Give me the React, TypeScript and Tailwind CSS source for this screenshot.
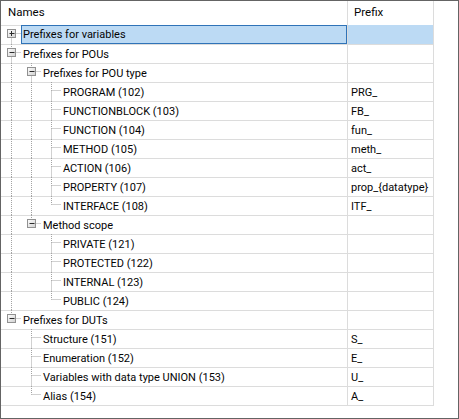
import React from "react";

type Item = {
  label: string;
  prefix?: string;
  open?: boolean;
  collapsed?: boolean;
  children?: Item[];
};

const tree: Item[] = [
  { label: "Prefixes for variables", collapsed: true },
  {
    label: "Prefixes for POUs",
    open: true,
    children: [
      {
        label: "Prefixes for POU type",
        open: true,
        children: [
          { label: "PROGRAM (102)", prefix: "PRG_" },
          { label: "FUNCTIONBLOCK (103)", prefix: "FB_" },
          { label: "FUNCTION (104)", prefix: "fun_" },
          { label: "METHOD (105)", prefix: "meth_" },
          { label: "ACTION (106)", prefix: "act_" },
          { label: "PROPERTY (107)", prefix: "prop_{datatype}" },
          { label: "INTERFACE (108)", prefix: "ITF_" },
        ],
      },
      {
        label: "Method scope",
        open: true,
        children: [
          { label: "PRIVATE (121)" },
          { label: "PROTECTED (122)" },
          { label: "INTERNAL (123)" },
          { label: "PUBLIC (124)" },
        ],
      },
    ],
  },
  {
    label: "Prefixes for DUTs",
    open: true,
    children: [
      { label: "Structure (151)", prefix: "S_" },
      { label: "Enumeration (152)", prefix: "E_" },
      { label: "Variables with data type UNION (153)", prefix: "U_" },
      { label: "Alias (154)", prefix: "A_" },
    ],
  },
];

type Row = {
  item: Item;
  depth: number;
  guides: boolean[];
  last: boolean;
  firstRoot: boolean;
  expander: "open" | "closed" | null;
};

function flatten(items: Item[], depth: number, guides: boolean[], out: Row[]) {
  items.forEach((item, i) => {
    const last = i === items.length - 1;
    const hasKids = !!item.collapsed || !!(item.children && item.children.length);
    out.push({
      item,
      depth,
      guides,
      last,
      firstRoot: depth === 0 && i === 0,
      expander: hasKids ? (item.collapsed ? "closed" : "open") : null,
    });
    if (item.children && item.open) {
      flatten(item.children, depth + 1, [...guides, !last], out);
    }
  });
}

const rows: Row[] = [];
flatten(tree, 0, [], rows);

const DOT = "#a3a3a3";

function Guides({ row }: { row: Row }) {
  const w = 20 * (row.depth + 1) + 2;
  const lx = (d: number) => 10 + 20 * d + 0.5;
  const own = lx(row.depth);
  const mid = 8.5;
  return (
    <svg
      width={w}
      height={19}
      className="absolute left-0 top-[-1px] pointer-events-none"
    >
      {row.guides.map((on, a) =>
        on ? (
          <line key={a} x1={lx(a)} y1={0} x2={lx(a)} y2={19} stroke={DOT} strokeDasharray="1 1" />
        ) : null
      )}
      {!row.firstRoot && (
        <line x1={own} y1={0} x2={own} y2={mid} stroke={DOT} strokeDasharray="1 1" />
      )}
      {!row.last && (
        <line x1={own} y1={mid} x2={own} y2={19} stroke={DOT} strokeDasharray="1 1" />
      )}
      <line x1={own} y1={mid} x2={own + 10} y2={mid} stroke={DOT} strokeDasharray="1 1" />
      {row.expander && (
        <g>
          <rect
            x={own - 4}
            y={4.5}
            width={8}
            height={8}
            fill="url(#tree-box-fill)"
            stroke="#919191"
          />
          <line x1={own - 2} y1={mid} x2={own + 3} y2={mid} stroke="#2b2b2b" />
          {row.expander === "closed" && (
            <line x1={own} y1={6} x2={own} y2={11} stroke="#2b2b2b" />
          )}
        </g>
      )}
    </svg>
  );
}

export default function App() {
  return (
    <div className="relative w-[459px] h-[419px] overflow-hidden border border-[#646464] bg-white text-[11px] leading-none text-[#050505] font-['Segoe_UI','Roboto',sans-serif]">
      <svg width={0} height={0} className="absolute">
        <defs>
          <linearGradient id="tree-box-fill" x1="0" y1="0" x2="1" y2="1">
            <stop offset="0" stopColor="#ffffff" />
            <stop offset="1" stopColor="#cfcfcf" />
          </linearGradient>
        </defs>
      </svg>

      <div className="w-[433px] border-b border-[#dcdcdc]">
        {/* column headers */}
        <div className="flex h-[24px]">
          <div className="flex w-[347px] items-center border-r border-[#dcdcdc] pl-[7px] text-[11.5px]">
            Names
          </div>
          <div className="flex w-[86px] items-center border-r border-[#dcdcdc] pl-[6px] text-[11.5px]">
            Prefix
          </div>
        </div>

        {rows.map((row, i) => {
          const selected = i === 0;
          return (
            <div key={i} className="flex h-[19px] border-t border-[#dcdcdc]">
              <div className="relative flex w-[347px] border-r border-[#dcdcdc]">
                <Guides row={row} />
                <div style={{ width: 20 + 20 * row.depth }} className="shrink-0" />
                {selected ? (
                  <div className="-mt-px flex h-[19px] flex-1 items-center border border-[#2f73b8] bg-[#bcdaf4] pl-px">
                    {row.item.label}
                  </div>
                ) : (
                  <div className="flex flex-1 items-center whitespace-nowrap pl-[2px]">
                    {row.item.label}
                  </div>
                )}
              </div>
              {selected ? (
                <div className="-mt-px flex h-[19px] w-[86px] items-center border-r border-[#dcdcdc] bg-[#bcdaf4] pl-[3px]" />
              ) : (
                <div className="flex w-[86px] items-center whitespace-nowrap border-r border-[#dcdcdc] pl-[3px]">
                  {row.item.prefix ?? ""}
                </div>
              )}
            </div>
          );
        })}
      </div>
    </div>
  );
}
